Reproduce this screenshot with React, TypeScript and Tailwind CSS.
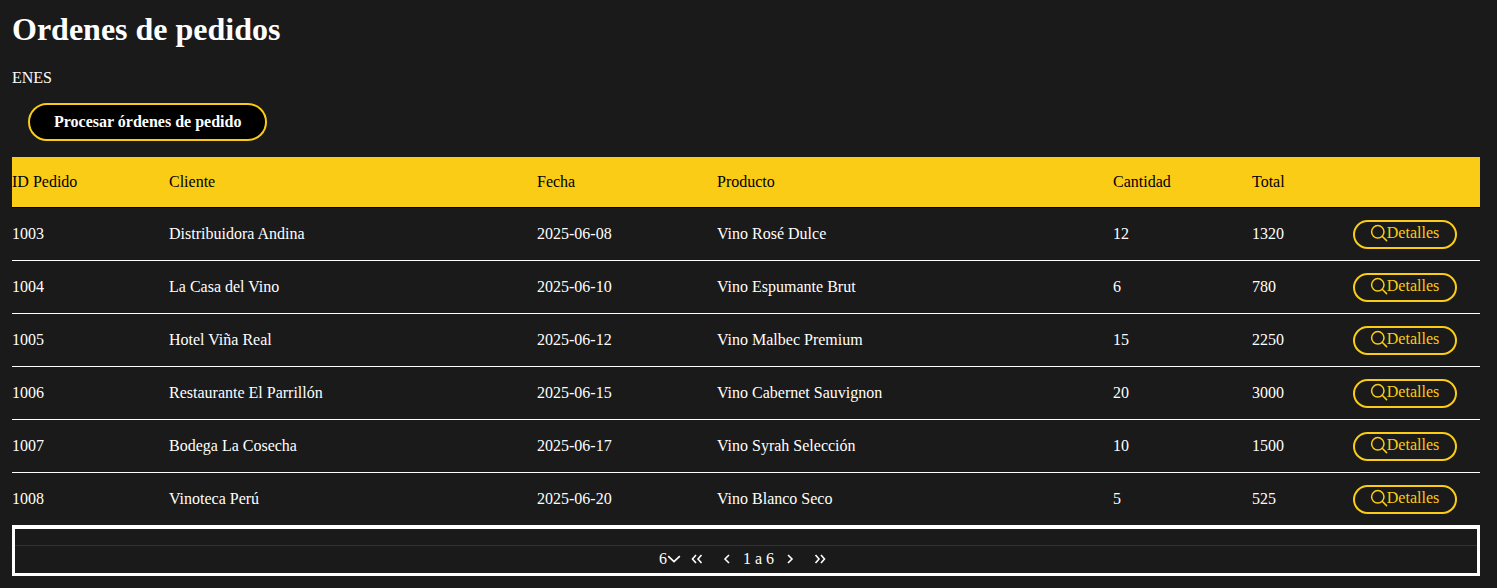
const orders = [
  { id: 1003, client: "Distribuidora Andina", date: "2025-06-08", product: "Vino Rosé Dulce", qty: 12, total: 1320 },
  { id: 1004, client: "La Casa del Vino", date: "2025-06-10", product: "Vino Espumante Brut", qty: 6, total: 780 },
  { id: 1005, client: "Hotel Viña Real", date: "2025-06-12", product: "Vino Malbec Premium", qty: 15, total: 2250 },
  { id: 1006, client: "Restaurante El Parrillón", date: "2025-06-15", product: "Vino Cabernet Sauvignon", qty: 20, total: 3000 },
  { id: 1007, client: "Bodega La Cosecha", date: "2025-06-17", product: "Vino Syrah Selección", qty: 10, total: 1500 },
  { id: 1008, client: "Vinoteca Perú", date: "2025-06-20", product: "Vino Blanco Seco", qty: 5, total: 525 },
];

const headers = ["ID Pedido", "Cliente", "Fecha", "Producto", "Cantidad", "Total"];

function SearchIcon() {
  return (
    <svg viewBox="0 0 16 16" className="mt-[3px] size-4 overflow-visible" fill="none" stroke="currentColor" strokeWidth="1.5" aria-hidden="true">
      <circle cx="6.800" cy="6.800" r="6.200" />
      <path d="M11.200 11.200 15.600 15.600" strokeLinecap="round" />
    </svg>
  );
}

function OrdersTable() {
  return (
    <table className="mt-4 w-full table-fixed border-collapse text-left">
      <colgroup>
        <col className="w-[157px]" />
        <col className="w-[368px]" />
        <col className="w-[180px]" />
        <col className="w-[396px]" />
        <col className="w-[139px]" />
        <col className="w-[78px]" />
        <col className="w-[150px]" />
      </colgroup>
      <thead>
        <tr className="h-[50px] border-b border-black bg-[#facc15] text-black">
          {headers.map((h) => (
            <th key={h} scope="col" className="p-0 font-normal">{h}</th>
          ))}
          <td className="p-0" />
        </tr>
      </thead>
      <tbody>
        {orders.map((o) => (
          <tr key={o.id} className="h-[53px] border-b border-white">
            <td className="p-0">{o.id}</td>
            <td className="p-0">{o.client}</td>
            <td className="p-0">{o.date}</td>
            <td className="p-0">{o.product}</td>
            <td className="p-0">{o.qty}</td>
            <td className="p-0">{o.total}</td>
            <td className="p-0 pt-0.5">
              <button
                type="button"
                className="mx-auto flex h-[29px] w-[104px] items-start justify-center rounded-full border-2 border-[#facc15] text-[#facc15]"
              >
                <SearchIcon />
                <span className="leading-[22px]">Detalles</span>
              </button>
            </td>
          </tr>
        ))}
      </tbody>
    </table>
  );
}

function Arrow({ label, d }: { label: string; d: string }) {
  return (
    <button type="button" aria-label={label} className="flex size-4 items-center justify-center">
      <svg viewBox="0 0 16 16" className="size-4" fill="none" stroke="currentColor" strokeWidth="1.6" aria-hidden="true">
        <path d={d} />
      </svg>
    </button>
  );
}

function Pager() {
  return (
    <nav aria-label="Paginación" className="border-3 border-white pt-4">
      <div className="flex h-7 items-center justify-center border-t border-[#333333]">
        <div className="flex w-[174px] items-center">
          <div className="relative mr-2 flex w-[22px] items-center">
            <select aria-label="Filas por página" defaultValue="6" className="w-full appearance-none bg-transparent leading-5">
              <option className="bg-[#1a1a1a]">6</option>
            </select>
            <svg viewBox="0 0 12 12" className="pointer-events-none absolute left-2 size-3.5" fill="none" stroke="currentColor" strokeWidth="1.4" aria-hidden="true">
              <path d="M1 3.500 6 8.300 11 3.500" />
            </svg>
          </div>
          <Arrow label="Primera página" d="M7 4 3.500 8 7 12M12.500 4 9 8l3.500 4" />
          <span className="w-3.5" />
          <Arrow label="Página anterior" d="M10 4 6 8l4 4" />
          <span className="mx-2 whitespace-nowrap">1 a 6</span>
          <Arrow label="Página siguiente" d="M6 4l4 4-4 4" />
          <span className="w-3.5" />
          <Arrow label="Última página" d="M3.500 4 7 8l-3.500 4M9 4l3.500 4L9 12" />
        </div>
      </div>
    </nav>
  );
}

export default function App() {
  return (
    <main className="min-h-screen bg-[#1a1a1a] pb-3 pl-3 pr-[17px] pt-[11px] font-['Liberation_Serif',serif] text-base text-white">
      <h1 className="text-[32px] font-bold leading-9">Ordenes de pedidos</h1>
      <p className="mt-5 leading-[22px]">ENES</p>
      <button
        type="button"
        className="ml-4 mt-3.5 block h-[38px] rounded-full border-2 border-[#facc15] bg-black px-6 font-bold"
      >
        Procesar órdenes de pedido
      </button>
      <OrdersTable />
      <Pager />
    </main>
  );
}
